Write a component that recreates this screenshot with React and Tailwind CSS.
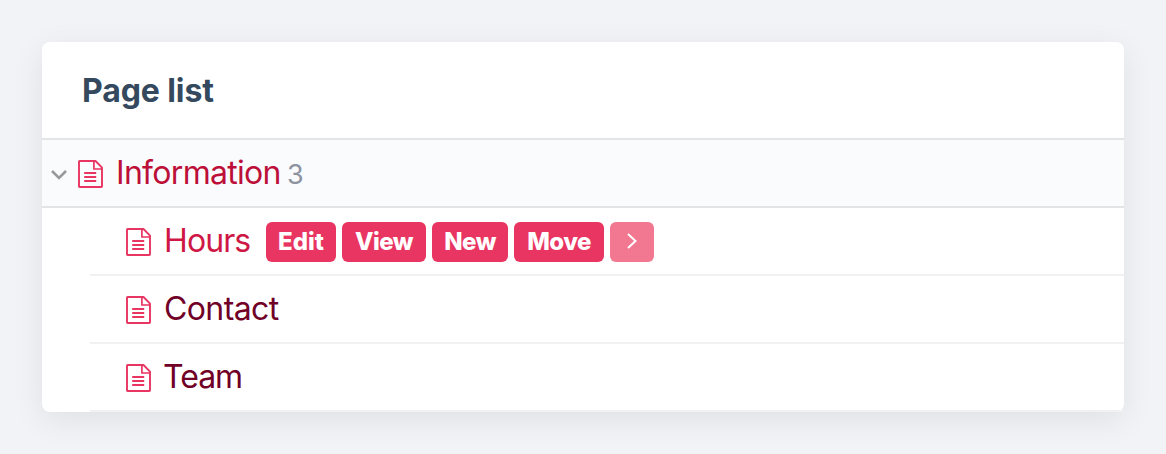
import React from "react";

function PageIcon() {
  return (
    <svg className="mt-0.5 h-7 w-[25px] shrink-0" viewBox="0 0 25 28" fill="none" stroke="#e83561">
      <path strokeWidth="1.9" strokeLinejoin="round" d="M1 1.7Q1 1 1.7 1H17.5L24 7.7V26.3Q24 27 23.3 27H1.7Q1 27 1 26.3Z" />
      <path strokeWidth="1.7" strokeLinejoin="round" d="M15.9 1V9H24" />
      <path strokeWidth="2" d="M6.2 13H18.2M6.2 17H18.2M6.2 21H18.2" />
    </svg>
  );
}

const actions = [
  { label: "Edit", box: "w-[70px]", text: "tracking-[0px]" },
  { label: "View", box: "w-[84px]", text: "tracking-[-0.5px]" },
  { label: "New", box: "w-[76px]", text: "tracking-[-0.5px]" },
  { label: "Move", box: "w-[90px]", text: "tracking-[-0.6px]" },
];

function Actions() {
  return (
    <div className="ml-4 flex gap-1.5 pt-px">
      {actions.map((a) => (
        <button
          key={a.label}
          className={`flex h-10 items-center justify-center rounded-md bg-[#e83561] text-2xl leading-none font-extrabold text-white ${a.box} ${a.text}`}
        >
          {a.label}
        </button>
      ))}
      <button aria-label="More" className="flex h-10 w-11 items-center justify-center rounded-md bg-[#f27891]">
        <svg className="mb-0.5 h-4 w-2.5" viewBox="0 0 10 16" fill="none" stroke="white" strokeWidth="2">
          <path d="M1 1L8.5 8L1 15" />
        </svg>
      </button>
    </div>
  );
}

function Row({ label, color, box, children }) {
  return (
    <li className="ml-12 flex h-[68px] items-center border-b-2 border-[#f1f1f2] pl-9">
      <PageIcon />
      <span className={`text-[32px] leading-10 whitespace-nowrap ${color} ${box}`}>{label}</span>
      {children}
    </li>
  );
}

export default function App() {
  return (
    <main className="h-[454px] w-full bg-[#f1f3f7] px-[42px] pt-[42px] font-['Inter','Liberation_Sans',sans-serif]">
      <section className="h-[370px] rounded-lg bg-white shadow-[0_8px_32px_rgba(0,0,0,0.08)]">
        <h1 className="flex h-[98px] items-center border-b-2 border-[#e3e4e6] pt-0.5 pl-10 text-[32px] leading-10 font-bold tracking-[-0.1px] text-[#34495e]">
          Page list
        </h1>
        <div className="flex h-[68px] items-center border-b-2 border-[#e3e4e6] bg-[#fafbfd] pl-[9px]">
          <svg className="mt-[3px] mr-[11px] h-2.5 w-4 shrink-0" viewBox="0 0 16 10" fill="none" stroke="#999" strokeWidth="2.6">
            <path d="M1 1L8 8L15 1" />
          </svg>
          <PageIcon />
          <span className="ml-[13px] w-[165px] text-[32px] leading-10 tracking-[-0.7px] whitespace-nowrap text-[#bc1039]">Information</span>
          <span className="ml-1.5 pt-1 text-[27px] leading-8 text-[#8c92a0]">3</span>
        </div>
        <ul>
          <Row label="Hours" color="text-[#cf1745]" box="ml-[13px] w-[86px] tracking-[-0.9px]">
            <Actions />
          </Row>
          <Row label="Contact" color="text-[#700026]" box="ml-[13px] tracking-[-0.6px]" />
          <Row label="Team" color="text-[#700026]" box="ml-3 tracking-[-1px]" />
        </ul>
      </section>
    </main>
  );
}
